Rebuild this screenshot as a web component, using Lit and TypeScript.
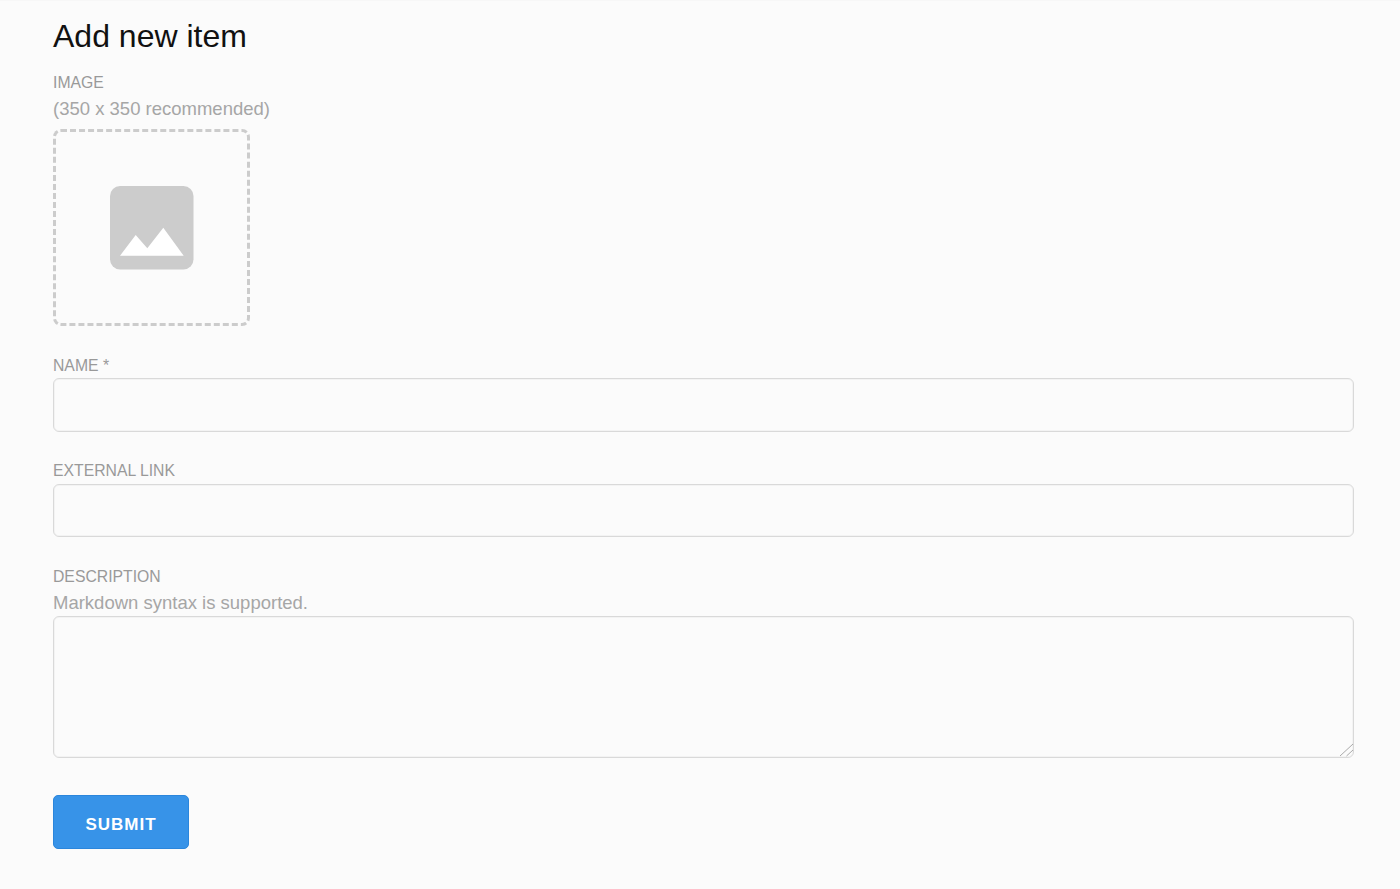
import { LitElement, html, css } from 'lit';
import { customElement } from 'lit/decorators.js';

@customElement('app-root')
export class AppRoot extends LitElement {
  static styles = css`
    :host {
      display: block;
      min-height: 889px;
      box-sizing: border-box;
      background: #fbfbfb;
      border-top: 1px solid #f7f7f7;
      padding: 0 46px 0 53px;
      font-family: "Liberation Sans", Arial, sans-serif;
      color: #999;
    }

    h1 {
      margin: 0;
      padding-top: 16px;
      font-size: 32px;
      line-height: 38px;
      font-weight: 400;
      color: #111;
    }

    .field {
      display: flex;
      flex-direction: column;
    }

    .image-field {
      margin-top: 18px;
    }

    .name-field {
      margin-top: 30px;
    }

    .link-field {
      margin-top: 29px;
    }

    .description-field {
      margin-top: 30px;
    }

    label {
      font-size: 15.75px;
      line-height: 20px;
      text-transform: uppercase;
      color: #999;
      margin-bottom: 3px;
    }

    .name-field label {
      margin-bottom: 2px;
    }

    .hint {
      font-size: 18.5px;
      line-height: 21px;
      color: #a6a6a6;
      margin-top: 2px;
      margin-bottom: 10px;
    }

    .description-field .hint {
      margin-top: 2px;
      margin-bottom: 3px;
    }

    .uploader {
      box-sizing: border-box;
      width: 197px;
      height: 197px;
      border: 3px dashed #ccc;
      border-radius: 8px;
      display: flex;
      align-items: center;
      justify-content: center;
    }

    .uploader svg {
      display: block;
    }

    input,
    textarea {
      box-sizing: border-box;
      display: block;
      width: 100%;
      margin: 0;
      padding: 12px;
      background: #fbfbfb;
      border: 1px solid #d9d9d9;
      border-radius: 6px;
      box-shadow: inset 0 0 0 1px #f3f3f3;
      outline: none;
      font: 16px "Liberation Sans", Arial, sans-serif;
    }

    input {
      height: 54px;
    }

    .link-field input {
      height: 53px;
    }

    .textarea-wrap {
      position: relative;
    }

    textarea {
      height: 142px;
      resize: none;
    }

    .grip {
      position: absolute;
      right: 0;
      bottom: 0;
      pointer-events: none;
    }

    button {
      display: block;
      box-sizing: border-box;
      width: 136px;
      height: 54px;
      margin-top: 37px;
      padding: 5px 0 0;
      background: #3793e8;
      border: 1px solid #2b86dc;
      border-radius: 5px;
      color: #fff;
      font: 700 17px "Liberation Sans", Arial, sans-serif;
      letter-spacing: 1px;
      text-transform: uppercase;
    }
  `;

  render() {
    return html`
      <h1>Add new item</h1>
      <div class="field image-field">
        <label>Image</label>
        <div class="hint">(350 x 350 recommended)</div>
        <div class="uploader">
          <svg width="84" height="84" viewBox="0 0 84 84">
            <rect width="83.5" height="83.5" rx="10" fill="#ccc"></rect>
            <path d="M10 69.7 L25.7 49 L37.3 62.3 L53.3 41.7 L73.7 69.7 Z" fill="#fff"></path>
          </svg>
        </div>
      </div>
      <div class="field name-field">
        <label>Name *</label>
        <input type="text" />
      </div>
      <div class="field link-field">
        <label>External link</label>
        <input type="text" />
      </div>
      <div class="field description-field">
        <label>Description</label>
        <div class="hint">Markdown syntax is supported.</div>
        <div class="textarea-wrap">
          <textarea></textarea>
          <svg class="grip" width="15" height="15" viewBox="0 0 15 15">
            <path d="M1 13 L14 1 M7.5 13 L14 7" stroke="#aaa" stroke-width="1" fill="none"></path>
          </svg>
        </div>
      </div>
      <button type="button">Submit</button>
    `;
  }
}
